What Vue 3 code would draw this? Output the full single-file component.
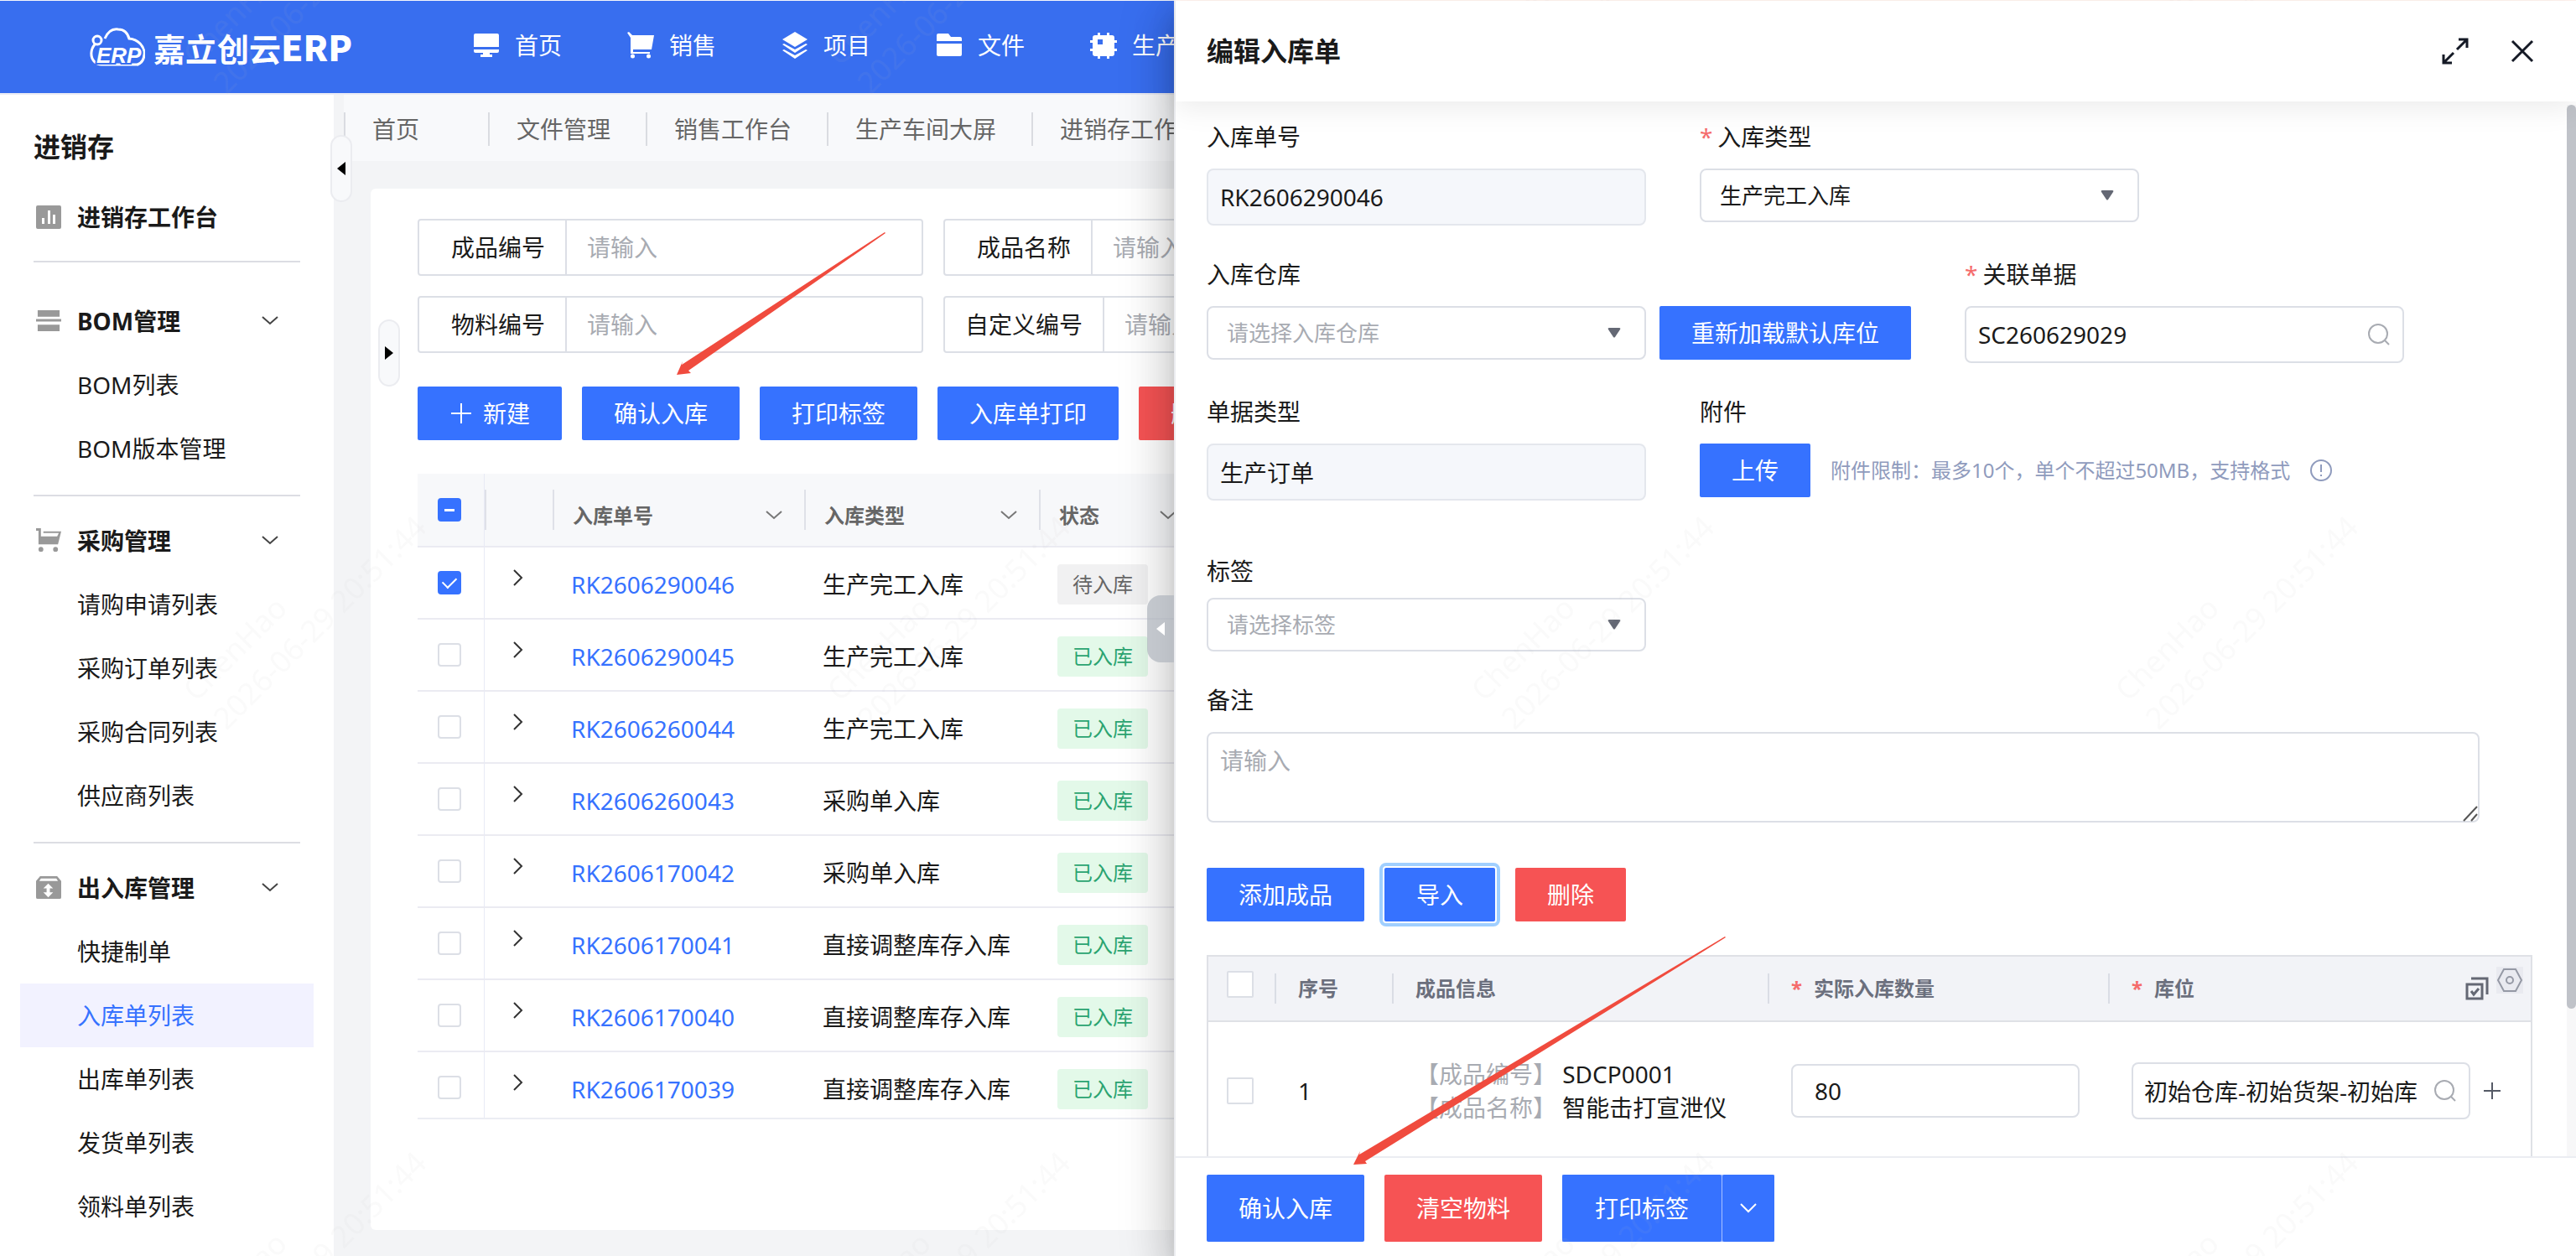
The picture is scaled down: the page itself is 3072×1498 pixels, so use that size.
<template>
  <div class="page">
    <header class="topbar">
      <a href="#" class="logo">
        <svg class="logo-icon" viewBox="0 0 66 46" fill="none" stroke="#fff" stroke-width="3">
          <path d="M18 13C22 4 28 1 34 2c7 0 11 4 13 11 11 1 18 9 18 18 0 6-3 11-8 13" />
          <circle cx="9" cy="15" r="5" />
          <path d="M6 20c-5 6-6 15 0 21 2 2 4 3 8 3h44" />
          <text class="logo-erp" x="8" y="42">ERP</text>
        </svg>
        <span>嘉立创云<b>ERP</b></span>
      </a>
      <nav class="topnav">
        <a v-for="item in topNav" :key="item.name" href="#">
          <svg viewBox="0 0 32 32" fill="#fff" fill-rule="evenodd"><path :d="item.icon" /></svg>
          {{ item.name }}
        </a>
      </nav>
    </header>

    <div class="layout">
      <aside class="sidebar">
        <h2>进销存</h2>
        <a href="#" class="side-home">
          <svg viewBox="0 0 30 30" fill="#999" fill-rule="evenodd"><path :d="icons.chart" /></svg>
          进销存工作台
        </a>
        <div v-for="group in menu" :key="group.name" class="side-group">
          <button class="group-title">
            <svg viewBox="0 0 31 31" fill="#999" fill-rule="evenodd"><path :d="group.icon" /></svg>
            <span>{{ group.name }}</span>
            <svg class="chevron" viewBox="0 0 20 12"><path d="M1 1l9 8 9-8" /></svg>
          </button>
          <a
            v-for="child in group.children"
            :key="child"
            href="#"
            class="side-item"
            :class="{ active: child === activeMenu }"
            >{{ child }}</a
          >
        </div>
        <button class="handle side-handle" aria-label="收起菜单">
          <svg viewBox="0 0 10 16"><path d="M10 0v16L0 8z" /></svg>
        </button>
      </aside>

      <main class="main">
        <nav class="tabs">
          <a v-for="tab in tabs" :key="tab" href="#">{{ tab }}</a>
        </nav>
        <section class="card">
          <button class="handle card-handle" aria-label="展开筛选">
            <svg viewBox="0 0 10 16"><path d="M0 0v16l10-8z" /></svg>
          </button>
          <div class="filters">
            <label v-for="name in filters" :key="name" class="filter">
              <span>{{ name }}</span>
              <input type="text" placeholder="请输入" />
            </label>
          </div>
          <div class="actions">
            <button class="btn btn-new">
              <svg viewBox="0 0 28 28" stroke="#fff" stroke-width="2"><path d="M2 14h24M14 2v24" /></svg>
              新建
            </button>
            <button class="btn">确认入库</button>
            <button class="btn">打印标签</button>
            <button class="btn">入库单打印</button>
            <button class="btn danger">删除</button>
          </div>
          <div class="list-wrap">
            <table class="list">
              <thead>
                <tr>
                  <th class="col-check"><input type="checkbox" class="check half" aria-label="全选" /></th>
                  <th class="col-expand"></th>
                  <th class="col-no">
                    <div class="th-inner">入库单号<svg class="chevron" viewBox="0 0 20 12"><path d="M1 1l9 8 9-8" /></svg></div>
                  </th>
                  <th class="col-type">
                    <div class="th-inner">入库类型<svg class="chevron" viewBox="0 0 20 12"><path d="M1 1l9 8 9-8" /></svg></div>
                  </th>
                  <th class="col-status">
                    <div class="th-inner">状态<svg class="chevron" viewBox="0 0 20 12"><path d="M1 1l9 8 9-8" /></svg></div>
                  </th>
                  <th></th>
                </tr>
              </thead>
              <tbody>
                <tr v-for="row in rows" :key="row.no">
                  <td class="col-check">
                    <input v-model="row.checked" type="checkbox" class="check" :aria-label="row.no" />
                  </td>
                  <td class="col-expand">
                    <button aria-label="展开"><svg viewBox="0 0 12 20"><path d="M1 1l9 9-9 9" /></svg></button>
                  </td>
                  <td><a href="#">{{ row.no }}</a></td>
                  <td>{{ row.type }}</td>
                  <td><span class="tag" :class="{ done: row.status === '已入库' }">{{ row.status }}</span></td>
                  <td></td>
                </tr>
              </tbody>
            </table>
          </div>
        </section>
      </main>
    </div>

    <aside class="drawer">
      <button class="drawer-handle" aria-label="展开">
        <svg viewBox="0 0 10 16" fill="#fff"><path d="M10 0v16L0 8z" /></svg>
      </button>
      <header class="drawer-head">
        <h2>编辑入库单</h2>
        <button aria-label="全屏">
          <svg class="head-icon" viewBox="0 0 32 32"><path d="M20 2h10v10M29 3L18 14M12 30H2V20M3 29l11-11" /></svg>
        </button>
        <button aria-label="关闭">
          <svg class="head-icon" viewBox="0 0 32 32"><path d="M4 4l24 24M28 4L4 28" /></svg>
        </button>
      </header>

      <div class="drawer-body">
        <form class="form" @submit.prevent>
          <div class="form-row">
            <div class="field">
              <label for="no">入库单号</label>
              <input id="no" class="control" type="text" value="RK2606290046" disabled />
            </div>
            <div class="field">
              <label for="type" class="required">入库类型</label>
              <div class="select">
                <select id="type"><option>生产完工入库</option></select>
                <svg viewBox="0 0 16 12"><path :d="icons.caret" /></svg>
              </div>
            </div>
          </div>
          <div class="form-row">
            <div class="field">
              <label for="store">入库仓库</label>
              <div class="inline">
                <div class="select">
                  <select id="store" class="empty"><option>请选择入库仓库</option></select>
                  <svg viewBox="0 0 16 12"><path :d="icons.caret" /></svg>
                </div>
                <button class="btn">重新加载默认库位</button>
              </div>
            </div>
            <div class="field">
              <label for="doc" class="required">关联单据</label>
              <div class="search">
                <input id="doc" class="control" type="text" value="SC260629029" />
                <svg viewBox="0 0 26 26"><circle cx="12" cy="12" r="11" /><path d="M20 20l5 5" /></svg>
              </div>
            </div>
          </div>
          <div class="form-row">
            <div class="field">
              <label for="doctype">单据类型</label>
              <input id="doctype" class="control" type="text" value="生产订单" disabled />
            </div>
            <div class="field">
              <label for="upload">附件</label>
              <div class="inline upload">
                <button id="upload" class="btn">上传</button>
                <span class="hint">附件限制：最多10个，单个不超过50MB，支持格式</span>
                <svg viewBox="0 0 26 26"><circle cx="13" cy="13" r="12" /><path d="M13 6v9M13 18v2" /></svg>
              </div>
            </div>
          </div>
          <div class="form-row tag-row">
            <div class="field">
              <label for="tag">标签</label>
              <div class="select">
                <select id="tag" class="empty"><option>请选择标签</option></select>
                <svg viewBox="0 0 16 12"><path :d="icons.caret" /></svg>
              </div>
            </div>
          </div>
          <div class="field">
            <label for="remark">备注</label>
            <div class="textarea">
              <textarea id="remark" placeholder="请输入"></textarea>
              <svg viewBox="0 0 20 20"><path d="M2 19L18 2M11 19l7-8" /></svg>
            </div>
          </div>
        </form>

        <div class="actions">
          <button class="btn">添加成品</button>
          <button class="btn focused">导入</button>
          <button class="btn danger">删除</button>
        </div>

        <table class="goods">
          <thead>
            <tr>
              <th class="g-check"><input type="checkbox" class="check big" aria-label="全选" /></th>
              <th class="g-index">序号</th>
              <th class="g-info">成品信息</th>
              <th class="g-num"><span class="star">*</span>实际入库数量</th>
              <th>
                <div class="g-last">
                  <span class="star">*</span>库位
                  <button class="g-copy" aria-label="批量设置">
                    <svg viewBox="0 0 28 28"><path d="M2 9h18v17H2zM7 2h19v19M7 17l3 4 6-7" /></svg>
                  </button>
                  <button class="g-set" aria-label="列设置">
                    <svg viewBox="0 0 32 32"><path d="M9 3h14l7 13-7 13H9L2 16z" /><circle cx="16" cy="16" r="4" /></svg>
                  </button>
                </div>
              </th>
            </tr>
          </thead>
          <tbody>
            <tr>
              <td class="g-check"><input type="checkbox" class="check big" aria-label="选择第1行" /></td>
              <td>1</td>
              <td>
                <div><span class="muted">【成品编号】</span> SDCP0001</div>
                <div><span class="muted">【成品名称】</span> 智能击打宣泄仪</div>
              </td>
              <td><input class="control qty" type="text" value="80" aria-label="实际入库数量" /></td>
              <td>
                <div class="place">
                  <div class="search">
                    <input class="control" type="text" value="初始仓库-初始货架-初始库" aria-label="库位" />
                    <svg viewBox="0 0 26 26"><circle cx="12" cy="12" r="11" /><path d="M20 20l5 5" /></svg>
                  </div>
                  <button aria-label="添加库位"><svg viewBox="0 0 20 20"><path d="M0 10h20M10 0v20" /></svg></button>
                </div>
              </td>
            </tr>
          </tbody>
        </table>
        <div class="scroll-track"><div class="scroll-thumb"></div></div>
      </div>

      <footer class="drawer-foot">
        <button class="btn">确认入库</button>
        <button class="btn danger">清空物料</button>
        <div class="split">
          <button class="btn">打印标签</button>
          <button class="btn split-more" aria-label="更多">
            <svg class="chevron" viewBox="0 0 20 12"><path d="M1 1l9 9 9-9" /></svg>
          </button>
        </div>
      </footer>
    </aside>

    <svg class="overlay" aria-hidden="true">
      <defs>
        <pattern id="watermark" x="0" y="130" width="768" height="758" patternUnits="userSpaceOnUse">
          <text x="234" y="708" transform="rotate(-45 234 708)">ChenHao</text>
          <text x="270" y="742" transform="rotate(-45 270 742)">2026-06-29 20:51:44</text>
        </pattern>
      </defs>
      <rect width="100%" height="100%" fill="url(#watermark)" />
      <path class="arrow" d="M1056 278L1055 277L813 435L814 431L807 447L824 445L821 442Z" />
      <path class="arrow" d="M2058 1118L2057 1117L1621 1377L1622 1373L1614 1389L1630 1388L1628 1385Z" />
    </svg>
  </div>
</template>

<script setup>
import { reactive, ref } from "vue";

const icons = {
  chart:
    "M2 1h26a2 2 0 0 1 2 2v24a2 2 0 0 1-2 2H2a2 2 0 0 1-2-2V3a2 2 0 0 1 2-2zM7 16v7h3v-7zM14 7v16h3V7zM20 12v11h3V12z",
  bom: "M2 2h27v8H2zM0 13h31v3H0zM2 20h27v8H2z",
  cart: "M0 0h6v10h20l2-4H9V4h22l-4 16H3V3H0zM3 26a3 3 0 1 0 6 0a3 3 0 1 0-6 0zM21 26a3 3 0 1 0 6 0a3 3 0 1 0-6 0z",
  stock:
    "M5 1h21l5 6v20a2 2 0 0 1-2 2H2a2 2 0 0 1-2-2V7zM6 4L4 7h23l-2-3zM15 10l-6 6h4v5H9l6 6 6-6h-4v-5h4z",
  caret: "M2 0h12q2 0 1 2L9 11q-1 1-2 0L1 2Q0 0 2 0z",
};

const topNav = [
  {
    name: "首页",
    icon: "M3 2h26a2 2 0 0 1 2 2v14H1V4a2 2 0 0 1 2-2zM1 21h30v2a2 2 0 0 1-2 2h-9v2h3v3H9v-3h3v-2H3a2 2 0 0 1-2-2z",
  },
  {
    name: "销售",
    icon: "M0 1l2-1 4 4h26l-3 17H7v3h20v2H4V7zM4 29a2.500 2.500 0 1 0 5 0a2.500 2.500 0 1 0-5 0zM23 29a2.500 2.500 0 1 0 5 0a2.500 2.500 0 1 0-5 0z",
  },
  {
    name: "项目",
    icon: "M16 0l15 9-15 9L1 9zM1 15l2-1 13 7 13-7 2 1-15 10zM1 22l2-1 13 7 13-7 2 1-15 10z",
  },
  {
    name: "文件",
    icon: "M3 2h12l3 4h11a2 2 0 0 1 2 2v3H1V4a2 2 0 0 1 2-2zM1 14h30v13a2 2 0 0 1-2 2H3a2 2 0 0 1-2-2z",
  },
  {
    name: "生产",
    icon: "M9 1h3v3h8V1h3v3h3a3 3 0 0 1 3 3v3h3v3h-3v7h3v3h-3v3a3 3 0 0 1-3 3h-3v3h-3v-3h-8v3H9v-3H6a3 3 0 0 1-3-3v-3H0v-3h3v-7H0v-3h3V7a3 3 0 0 1 3-3h3zM9 9v6h6V9z",
  },
];

const tabs = ["首页", "文件管理", "销售工作台", "生产车间大屏", "进销存工作台"];
const filters = ["成品编号", "成品名称", "物料编号", "自定义编号"];

const activeMenu = ref("入库单列表");
const menu = [
  { name: "BOM管理", icon: icons.bom, children: ["BOM列表", "BOM版本管理"] },
  {
    name: "采购管理",
    icon: icons.cart,
    children: ["请购申请列表", "采购订单列表", "采购合同列表", "供应商列表"],
  },
  {
    name: "出入库管理",
    icon: icons.stock,
    children: ["快捷制单", "入库单列表", "出库单列表", "发货单列表", "领料单列表"],
  },
];

const rows = reactive([
  { no: "RK2606290046", type: "生产完工入库", status: "待入库", checked: true },
  { no: "RK2606290045", type: "生产完工入库", status: "已入库", checked: false },
  { no: "RK2606260044", type: "生产完工入库", status: "已入库", checked: false },
  { no: "RK2606260043", type: "采购单入库", status: "已入库", checked: false },
  { no: "RK2606170042", type: "采购单入库", status: "已入库", checked: false },
  { no: "RK2606170041", type: "直接调整库存入库", status: "已入库", checked: false },
  { no: "RK2606170040", type: "直接调整库存入库", status: "已入库", checked: false },
  { no: "RK2606170039", type: "直接调整库存入库", status: "已入库", checked: false },
]);
</script>

<style>
body {
  margin: 0;
}
</style>

<style scoped>
* {
  box-sizing: border-box;
}
.page {
  position: relative;
  height: 100vh;
  overflow: hidden;
  display: flex;
  flex-direction: column;
  background: #f3f4f6;
  color: #1a1a1a;
  font-family: "Noto Sans", "Noto Sans CJK SC", sans-serif;
  font-size: 28px;
  line-height: 40px;
}
a {
  color: inherit;
  text-decoration: none;
}
button,
input,
select,
textarea {
  font: inherit;
  color: inherit;
}
button {
  border: 0;
  padding: 0;
  background: none;
  cursor: pointer;
}
h2 {
  margin: 0;
  font-size: 32px;
}
svg {
  flex: none;
  display: block;
}

/* top bar */
.topbar {
  flex: none;
  height: 113px;
  display: flex;
  align-items: center;
  border-top: 1px solid #f3f5fb;
  border-bottom: 2px solid #ebecf5;
  background: #386eef;
  color: #fff;
}
.logo {
  width: 564px;
  padding-left: 107px;
  display: flex;
  align-items: center;
  gap: 10px;
  font-size: 38px;
  font-weight: bold;
  font-family: "Noto Sans CJK SC", sans-serif;
}
.logo b {
  font-size: 42px;
}
.logo-icon {
  width: 66px;
  height: 46px;
}
.logo-erp {
  font-size: 26px;
  font-style: italic;
  font-weight: bold;
  font-family: "Liberation Sans", sans-serif;
  fill: #fff;
  stroke: #386eef;
  stroke-width: 4px;
  paint-order: stroke;
}
.topnav {
  display: flex;
  gap: 78px;
  padding-bottom: 4px;
}
.topnav a {
  display: flex;
  align-items: center;
  gap: 18px;
  white-space: nowrap;
}
.topnav svg {
  width: 32px;
  height: 32px;
}

.layout {
  flex: 1;
  min-height: 0;
  display: flex;
}

/* sidebar */
.sidebar {
  position: relative;
  flex: none;
  width: 398px;
  padding-top: 42px;
  background: #fff;
}
.sidebar h2 {
  padding-left: 40px;
}
.side-home {
  height: 76px;
  margin-top: 26px;
  padding-left: 43px;
  display: flex;
  align-items: center;
  gap: 19px;
  font-weight: bold;
}
.side-home svg,
.group-title svg:first-child {
  width: 30px;
  height: 30px;
}
.side-home + .side-group {
  margin-top: 14px;
  padding-top: 34px;
}
.side-group {
  margin-top: 17px;
  padding: 17px 24px 0;
  background: linear-gradient(#dcdde3, #dcdde3) no-repeat 40px 0 / 318px 2px;
}
.group-title {
  width: 100%;
  height: 76px;
  padding: 0 42px 0 19px;
  display: flex;
  align-items: center;
  gap: 19px;
  font-weight: bold;
}
.group-title span {
  flex: 1;
  text-align: left;
}
.chevron {
  width: 20px;
  height: 12px;
  fill: none;
  stroke: #444;
  stroke-width: 2px;
}
.side-item {
  display: block;
  padding-left: 68px;
  line-height: 76px;
}
.side-item.active {
  background: #f2f2ff;
  color: #3672ff;
}
.handle {
  position: absolute;
  width: 26px;
  height: 80px;
  display: flex;
  align-items: center;
  justify-content: center;
  border: 2px solid #ebecf0;
  border-radius: 13px;
  background: #f8f9fb;
}
.handle svg {
  width: 10px;
  height: 16px;
}
.side-handle {
  z-index: 1;
  top: 48px;
  right: -22px;
}
.card-handle {
  top: 156px;
  left: 9px;
}

/* list page */
.main {
  flex: 1;
  min-width: 0;
  display: flex;
  flex-direction: column;
  padding: 0 32px 31px 12px;
}
.tabs {
  height: 79px;
  margin-right: -32px;
  padding-top: 21px;
  display: flex;
  background: #f8f9fb;
  color: #666;
}
.tabs a {
  flex: none;
  height: 40px;
  min-width: 172px;
  padding: 0 42px 0 32px;
  border-left: 2px solid #dadce1;
}
.card {
  position: relative;
  flex: 1;
  min-height: 0;
  margin: 33px 0 0 32px;
  padding: 36px 56px 132px;
  display: flex;
  flex-direction: column;
  border-radius: 6px;
  background: #fff;
}
.filters {
  display: grid;
  grid-template-columns: 603px 603px;
  gap: 24px;
}
.filter {
  height: 68px;
  display: flex;
  border: 2px solid #dcdfe6;
  border-radius: 4px;
}
.filter span {
  flex: none;
  min-width: 176px;
  padding-right: 24px;
  padding-left: 24px;
  border-right: 2px solid #dcdfe6;
  text-align: right;
  line-height: 64px;
}
.filter input {
  flex: 1;
  min-width: 0;
  padding: 0 24px;
  border: 0;
  background: none;
}
input::placeholder,
textarea::placeholder {
  color: #a8abb2;
  opacity: 1;
}
.actions {
  display: flex;
  gap: 24px;
}
.card .actions {
  margin: 40px 0;
}
.btn {
  flex: none;
  height: 64px;
  padding: 0 38px;
  border-radius: 2px;
  background: #3672ff;
  color: #fff;
  white-space: nowrap;
}
.btn.danger {
  background: #f65354;
}
.btn-new {
  display: flex;
  align-items: center;
  gap: 12px;
}
.btn-new svg {
  width: 28px;
  height: 28px;
}
.list-wrap {
  flex: 1;
  min-height: 0;
  overflow: hidden;
  border-bottom: 2px solid #ebedf3;
}
table {
  width: 100%;
  table-layout: fixed;
  border-collapse: separate;
  border-spacing: 0;
}
th {
  text-align: left;
}
.list th {
  height: 88px;
  padding: 14px 26px 0 24px;
  border-bottom: 2px solid #ebebf2;
  background: #f7f8fa linear-gradient(#dfe1e8, #dfe1e8) no-repeat left center / 2px 48px;
  color: #666;
  font-size: 24px;
}
.list td {
  height: 86px;
  padding: 4px 22px 0;
  border-bottom: 2px solid #ebebf2;
  white-space: nowrap;
}
.list .chevron {
  stroke: #777;
}
.list .col-check {
  width: 80px;
  padding: 0 3px 0 0;
  border-right: 1px solid #e8eaf5;
}
.list .check {
  margin: 0 auto;
}
.list th.col-check {
  background: #f7f8fa;
}
.list .col-expand {
  width: 81px;
  padding: 0 0 14px 34px;
}
.col-expand svg {
  width: 12px;
  height: 20px;
  fill: none;
  stroke: #333;
  stroke-width: 2px;
}
.col-no {
  width: 300px;
}
.col-type {
  width: 280px;
}
.col-status {
  width: 180px;
}
.list .col-status {
  padding-right: 16px;
}
.th-inner {
  display: flex;
  align-items: center;
  justify-content: space-between;
}
.list a {
  color: #3672ff;
}
.tag {
  display: inline-block;
  height: 48px;
  padding: 0 18px;
  border-radius: 4px;
  background: #f1f1f2;
  color: #666;
  font-size: 24px;
  line-height: 48px;
  vertical-align: middle;
}
.tag.done {
  background: #e3f9e9;
  color: #2ba471;
}

/* check boxes */
.check {
  appearance: none;
  width: 28px;
  height: 28px;
  margin: 0;
  display: flex;
  align-items: center;
  justify-content: center;
  border: 2px solid #dcdfe6;
  border-radius: 4px;
  background: #fff;
}
.check.big {
  width: 32px;
  height: 32px;
  border-radius: 2px;
}
.check:checked,
.check.half {
  border-color: #3672ff;
  background: #3672ff;
}
.check:checked::after {
  content: "";
  width: 8px;
  height: 14px;
  margin-bottom: 4px;
  border: solid #fff;
  border-width: 0 2px 2px 0;
  transform: rotate(45deg);
}
.check.half::after {
  content: "";
  width: 12px;
  height: 3px;
  background: #fff;
}

/* drawer */
.drawer {
  position: absolute;
  top: 0;
  right: 0;
  bottom: 0;
  width: 54.43%;
  display: flex;
  flex-direction: column;
  border-top: 1px solid #fff3ee;
  border-left: 2px solid #ebecf0;
  background: #fff;
  box-shadow: 0 16px 20px -10px rgba(0, 0, 0, 0.2), 0 32px 48px 4px rgba(0, 0, 0, 0.14),
    0 12px 60px 10px rgba(0, 0, 0, 0.12);
}
.drawer-handle {
  position: absolute;
  top: 709px;
  left: -34px;
  width: 32px;
  height: 80px;
  display: flex;
  align-items: center;
  justify-content: center;
  border-radius: 16px 0 0 16px;
  background: rgba(175, 181, 190, 0.7);
}
.drawer-handle svg {
  width: 12px;
  height: 16px;
}
.drawer-head {
  position: relative;
  z-index: 1;
  flex: none;
  height: 120px;
  padding: 0 48px 0 37px;
  display: flex;
  align-items: center;
  gap: 48px;
  background: #fff;
  box-shadow: 0 8px 32px rgba(0, 0, 0, 0.08);
}
.drawer-head h2 {
  flex: 1;
}
.head-icon {
  width: 32px;
  height: 32px;
  fill: none;
  stroke: #151a26;
  stroke-width: 3px;
}
.drawer-body {
  position: relative;
  flex: 1;
  min-height: 0;
  overflow: hidden;
  padding: 22px 52px 0 37px;
}
.form {
  display: flex;
  flex-direction: column;
  gap: 38px;
}
.form-row {
  display: flex;
  gap: 64px;
}
.field {
  display: flex;
  flex-direction: column;
  gap: 18px;
}
.required::before,
.star {
  content: "*";
  margin-right: 6px;
  color: #f56c6c;
}
.star {
  margin-right: 14px;
}
.control {
  width: 524px;
  height: 68px;
  padding: 0 14px;
  border: 2px solid #dcdfe6;
  border-radius: 8px;
  background: #fff;
}
.control:disabled {
  border-color: #e4e7ed;
  background: #f5f7fb;
}
.select {
  position: relative;
  width: 524px;
}
.select select {
  width: 100%;
  height: 64px;
  padding: 0 22px;
  appearance: none;
  border: 2px solid #dcdfe6;
  border-radius: 8px;
  background: #fff;
  font-size: 26px;
}
.select .empty {
  color: #a8abb2;
}
.select svg {
  position: absolute;
  top: 26px;
  right: 30px;
  width: 16px;
  height: 12px;
  fill: #646874;
  pointer-events: none;
}
.inline {
  display: flex;
  gap: 16px;
}
.search {
  position: relative;
}
.search svg {
  position: absolute;
  top: 21px;
  right: 17px;
  width: 26px;
  height: 26px;
  fill: none;
  stroke: #a8abb2;
  stroke-width: 2px;
}
.upload {
  align-items: center;
  gap: 24px;
  color: #8f9bbd;
  font-size: 24px;
}
.upload .btn {
  font-size: 28px;
}
.upload svg {
  width: 26px;
  height: 26px;
  fill: none;
  stroke: #8f9bbd;
  stroke-width: 2px;
}
.tag-row {
  margin-top: 26px;
}
.tag-row .field {
  gap: 12px;
}
.textarea {
  position: relative;
  width: 96%;
}
.textarea textarea {
  display: block;
  width: 100%;
  height: 108px;
  padding: 12px 14px;
  resize: none;
  border: 2px solid #dcdfe6;
  border-radius: 8px;
  background: #fff;
}
.textarea svg {
  position: absolute;
  right: 1px;
  bottom: 1px;
  width: 20px;
  height: 20px;
  stroke: #555;
  stroke-width: 2px;
}
.drawer-body .actions {
  margin: 54px 0 40px;
}
.btn.focused {
  outline: 4px solid #a0cfff;
  outline-offset: 2px;
}
.goods {
  border: solid #dfe1e6;
  border-width: 2px 2px 0;
}
.goods th {
  height: 78px;
  padding: 0 0 0 28px;
  border-bottom: 2px solid #dfe1e6;
  background: #f2f3f7 linear-gradient(#dadde5, #dadde5) no-repeat left center / 2px 36px;
  color: #6b6f7d;
  font-size: 24px;
}
.goods td {
  height: 164px;
  padding: 0 0 0 28px;
}
.goods .g-check {
  width: 79px;
  padding-left: 22px;
}
.goods th.g-check {
  padding-bottom: 10px;
  background: #f2f3f7;
}
.g-index {
  width: 140px;
}
.g-info {
  width: 448px;
}
.g-num {
  width: 406px;
}
.muted {
  color: #a8abb2;
}
.qty {
  width: 344px;
  height: 64px;
  padding: 0 26px;
  vertical-align: middle;
}
.g-last {
  display: flex;
  align-items: center;
}
.g-copy {
  margin-left: auto;
}
.g-copy svg {
  width: 28px;
  height: 28px;
  fill: none;
  stroke: #646874;
  stroke-width: 3px;
}
.g-set {
  margin: 0 9px 20px;
  background: #e9eaf0;
}
.g-set svg {
  width: 32px;
  height: 32px;
  fill: none;
  stroke: #9599a5;
  stroke-width: 2px;
}
.place {
  display: flex;
  align-items: center;
  gap: 16px;
}
.place .search {
  width: 404px;
}
.place .control {
  width: 100%;
  padding: 0 56px 0 13px;
}
.place button svg {
  width: 20px;
  height: 20px;
  stroke: #555a66;
  stroke-width: 2px;
}
.scroll-track {
  position: absolute;
  top: 4px;
  right: 0;
  bottom: 0;
  width: 11px;
  background: #f7f7f8;
}
.scroll-thumb {
  height: 86%;
  border-radius: 6px;
  background: #c0c3c9;
}
.drawer-foot {
  flex: none;
  padding: 20px 37px 17px;
  display: flex;
  gap: 24px;
  border-top: 2px solid #ebedf2;
  background: #fff;
}
.drawer-foot .btn {
  height: 80px;
}
.split {
  display: flex;
  gap: 1px;
  background: #a9c2ff;
}
.split .btn {
  padding: 0 39px;
}
.split .split-more {
  padding: 0 21px;
}
.split .chevron {
  stroke: #fff;
}

/* watermark and guide arrows */
.overlay {
  position: absolute;
  inset: 0;
  width: 100%;
  height: 100%;
  pointer-events: none;
}
.overlay text {
  font-size: 36px;
  fill: rgba(184, 184, 184, 0.07);
}
.arrow {
  fill: #f04b3e;
}
</style>
